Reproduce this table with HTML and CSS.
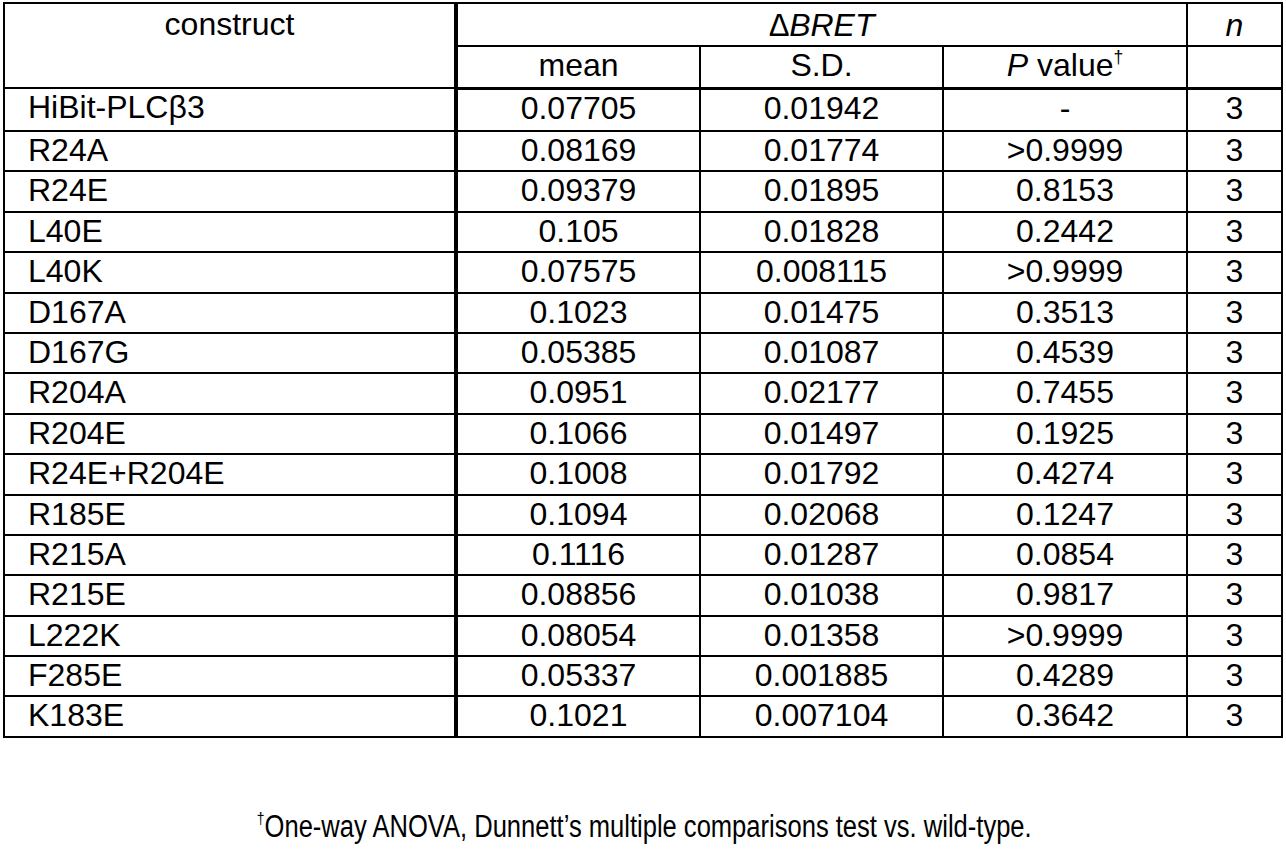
FILE: index.html
```html
<!DOCTYPE html>
<html lang="en">
<head>
<meta charset="utf-8">
<title>ΔBRET table</title>
<link rel="stylesheet" href="styles.css">
</head>
<body>
<div class="page">
<table class="data">
  <colgroup>
    <col class="c1"><col class="c2"><col class="c3"><col class="c4"><col class="c5">
  </colgroup>
  <thead>
    <tr class="h1">
      <th rowspan="2" class="name construct">construct</th>
      <th colspan="3" class="it">∆BRET</th>
      <th class="it">n</th>
    </tr>
    <tr class="h2">
      <th>mean</th>
      <th>S.D.</th>
      <th><span class="it">P</span> value<sup>†</sup></th>
      <th></th>
    </tr>
  </thead>
  <tbody>
    <tr class="first"><td class="name">HiBit-PLCβ3</td><td>0.07705</td><td>0.01942</td><td>-</td><td>3</td></tr>
    <tr><td class="name">R24A</td><td>0.08169</td><td>0.01774</td><td>&gt;0.9999</td><td>3</td></tr>
    <tr><td class="name">R24E</td><td>0.09379</td><td>0.01895</td><td>0.8153</td><td>3</td></tr>
    <tr><td class="name">L40E</td><td>0.105</td><td>0.01828</td><td>0.2442</td><td>3</td></tr>
    <tr><td class="name">L40K</td><td>0.07575</td><td>0.008115</td><td>&gt;0.9999</td><td>3</td></tr>
    <tr><td class="name">D167A</td><td>0.1023</td><td>0.01475</td><td>0.3513</td><td>3</td></tr>
    <tr><td class="name">D167G</td><td>0.05385</td><td>0.01087</td><td>0.4539</td><td>3</td></tr>
    <tr><td class="name">R204A</td><td>0.0951</td><td>0.02177</td><td>0.7455</td><td>3</td></tr>
    <tr><td class="name">R204E</td><td>0.1066</td><td>0.01497</td><td>0.1925</td><td>3</td></tr>
    <tr><td class="name">R24E+R204E</td><td>0.1008</td><td>0.01792</td><td>0.4274</td><td>3</td></tr>
    <tr><td class="name">R185E</td><td>0.1094</td><td>0.02068</td><td>0.1247</td><td>3</td></tr>
    <tr><td class="name">R215A</td><td>0.1116</td><td>0.01287</td><td>0.0854</td><td>3</td></tr>
    <tr><td class="name">R215E</td><td>0.08856</td><td>0.01038</td><td>0.9817</td><td>3</td></tr>
    <tr><td class="name">L222K</td><td>0.08054</td><td>0.01358</td><td>&gt;0.9999</td><td>3</td></tr>
    <tr><td class="name">F285E</td><td>0.05337</td><td>0.001885</td><td>0.4289</td><td>3</td></tr>
    <tr><td class="name">K183E</td><td>0.1021</td><td>0.007104</td><td>0.3642</td><td>3</td></tr>
  </tbody>
</table>
<p class="note"><span class="note-text"><sup>†</sup>One-way ANOVA, Dunnett’s multiple comparisons test vs. wild-type.</span></p>
</div>
</body>
</html>
```

FILE: styles.css
```css
html, body {
  margin: 0;
  padding: 0;
  background: #ffffff;
}
body {
  font-family: "Liberation Sans", Arial, sans-serif;
  color: #000000;
}
.page {
  padding: 2px 0 0 3px;
}
.data {
  border-collapse: collapse;
  table-layout: fixed;
  width: 1278px;
  font-size: 32px;
  line-height: 30px;
  border: 2px solid #000;
}
.c1 { width: 452px; }
.c2 { width: 244px; }
.c3 { width: 243px; }
.c4 { width: 244px; }
.c5 { width: 95px; }
.data th, .data td {
  border: 2px solid #000;
  padding: 4px 0 0 0;
  vertical-align: top;
  text-align: center;
  font-weight: normal;
  white-space: nowrap;
}
.data .name {
  border-right-width: 4px;
}
.data td.name {
  text-align: left;
  padding-left: 23px;
}
.data thead th.construct {
  padding-top: 5px;
}
.h1 { height: 43px; }
.h1 th { padding-top: 6px; }
.h2 { height: 42px; }
.h2 th { border-bottom-width: 3px; padding-top: 3px; }
.data tbody tr { height: 40.4px; }
.data tbody tr.first { height: 43px; }
.data tbody td { padding-top: 3px; }
.data tbody tr.first td { padding-top: 3px; }
.it { font-style: italic; }
sup {
  font-size: 55%;
  line-height: 0;
  vertical-align: 0.75em;
}
.note {
  margin: 72px 0 0 0;
  text-align: center;
  font-size: 31px;
  line-height: 34px;
}
.note-text {
  display: inline-block;
  transform: scaleX(0.824);
  transform-origin: center;
}
```
